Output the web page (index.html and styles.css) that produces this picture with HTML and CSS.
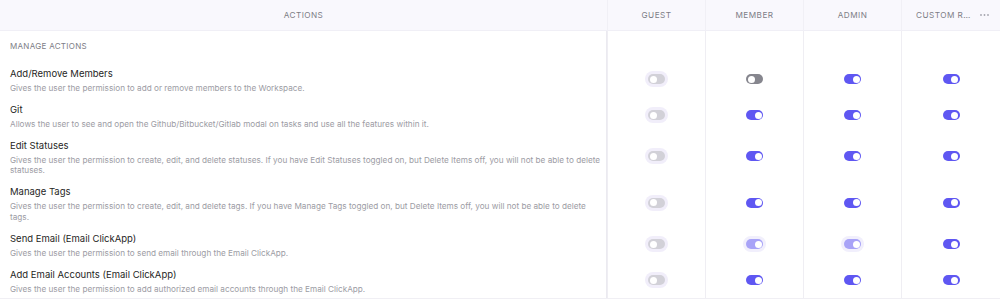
FILE: index.html
```html
<!DOCTYPE html>
<html lang="en">
<head>
    <meta charset="UTF-8">
    <meta name="viewport" content="width=device-width, initial-scale=1.0">
    <title>Permissions</title>
    <link rel="stylesheet" href="styles.css">
</head>
<body>
    <div class="perm-table">
        <div class="row head">
            <div class="cell">Actions</div>
            <div class="cell">Guest</div>
            <div class="cell">Member</div>
            <div class="cell">Admin</div>
            <div class="cell custom">
                <span class="custom-name">Custom Role</span>
                <svg class="more" width="9" height="4" viewBox="0 0 9 4">
                    <circle cx="1" cy="2" r="0.9"/>
                    <circle cx="4.5" cy="2" r="0.9"/>
                    <circle cx="8" cy="2" r="0.9"/>
                </svg>
            </div>
        </div>

        <div class="row section">
            <div class="cell label">Manage actions</div>
            <div class="cell"></div>
            <div class="cell"></div>
            <div class="cell"></div>
            <div class="cell"></div>
        </div>

        <div class="row">
            <div class="cell action">
                <div class="title">Add/Remove Members</div>
                <div class="desc">Gives the user the permission to add or remove members to the Workspace.</div>
            </div>
            <div class="cell"><span class="toggle disabled"></span></div>
            <div class="cell"><span class="toggle off"></span></div>
            <div class="cell"><span class="toggle on"></span></div>
            <div class="cell"><span class="toggle on"></span></div>
        </div>

        <div class="row">
            <div class="cell action">
                <div class="title">Git</div>
                <div class="desc">Allows the user to see and open the Github/Bitbucket/Gitlab modal on tasks and use all the features within it.</div>
            </div>
            <div class="cell"><span class="toggle disabled"></span></div>
            <div class="cell"><span class="toggle on"></span></div>
            <div class="cell"><span class="toggle on"></span></div>
            <div class="cell"><span class="toggle on"></span></div>
        </div>

        <div class="row">
            <div class="cell action">
                <div class="title">Edit Statuses</div>
                <div class="desc">Gives the user the permission to create, edit, and delete statuses. If you have Edit Statuses toggled on, but Delete Items off, you will not be able to delete statuses.</div>
            </div>
            <div class="cell"><span class="toggle disabled"></span></div>
            <div class="cell"><span class="toggle on"></span></div>
            <div class="cell"><span class="toggle on"></span></div>
            <div class="cell"><span class="toggle on"></span></div>
        </div>

        <div class="row">
            <div class="cell action">
                <div class="title">Manage Tags</div>
                <div class="desc">Gives the user the permission to create, edit, and delete tags. If you have Manage Tags toggled on, but Delete Items off, you will not be able to delete tags.</div>
            </div>
            <div class="cell"><span class="toggle disabled"></span></div>
            <div class="cell"><span class="toggle on"></span></div>
            <div class="cell"><span class="toggle on"></span></div>
            <div class="cell"><span class="toggle on"></span></div>
        </div>

        <div class="row">
            <div class="cell action">
                <div class="title">Send Email (Email ClickApp)</div>
                <div class="desc">Gives the user the permission to send email through the Email ClickApp.</div>
            </div>
            <div class="cell"><span class="toggle disabled"></span></div>
            <div class="cell"><span class="toggle on locked"></span></div>
            <div class="cell"><span class="toggle on locked"></span></div>
            <div class="cell"><span class="toggle on"></span></div>
        </div>

        <div class="row last">
            <div class="cell action">
                <div class="title">Add Email Accounts (Email ClickApp)</div>
                <div class="desc">Gives the user the permission to add authorized email accounts through the Email ClickApp.</div>
            </div>
            <div class="cell"><span class="toggle disabled"></span></div>
            <div class="cell"><span class="toggle on"></span></div>
            <div class="cell"><span class="toggle on"></span></div>
            <div class="cell"><span class="toggle on"></span></div>
        </div>
    </div>
</body>
</html>
```

FILE: styles.css
```css
* {
    box-sizing: border-box;
}
body {
    margin: 0;
    font-family: Inter, "Noto Sans", sans-serif;
    background: #fff;
    color: #2a2a30;
}
.perm-table {
    width: 1000px;
}
.row {
    display: grid;
    grid-template-columns: 607px 98px 98px 98px 1fr;
}
.cell {
    border-left: 1px solid #efeef3;
    display: flex;
    align-items: center;
    justify-content: center;
}
.cell:first-child {
    border-left: none;
}
.row + .row .cell:first-child {
    border-right: 1px solid #ebeaf0;
}
.head {
    height: 31px;
    background: #f9f8fd;
    border-bottom: 1px solid #f0eff6;
}
.head .cell {
    font-size: 8.2px;
    letter-spacing: 0.45px;
    text-transform: uppercase;
    color: #7d7d86;
    border-left-color: #f1f0f6;
}
.head .custom {
    justify-content: flex-start;
    padding: 0 8px 0 14px;
    gap: 8px;
}
.custom-name {
    width: 56px;
    white-space: nowrap;
    overflow: hidden;
    text-overflow: ellipsis;
}
.more {
    fill: #a5a5ad;
}
.section .cell {
    height: 30px;
}
.section .label {
    justify-content: flex-start;
    padding: 0 10px;
    font-size: 8px;
    letter-spacing: 0.3px;
    text-transform: uppercase;
    color: #7d7d86;
}
.action {
    display: block;
    padding: 2.5px 4px 4px 10px;
}
.title {
    font-size: 9.5px;
    line-height: 19px;
    color: #1f1f25;
}
.desc {
    font-size: 8.2px;
    line-height: 10.5px;
    color: #9c9ca4;
}
.last {
    border-bottom: 1px solid #f0eff4;
}
.toggle {
    position: relative;
    width: 17px;
    height: 10px;
    border-radius: 5px;
    background: #5f57f2;
}
.toggle::after {
    content: "";
    position: absolute;
    top: 1.5px;
    left: 1.5px;
    width: 7px;
    height: 7px;
    border-radius: 50%;
    background: #fff;
}
.toggle.on::after {
    left: 8.5px;
}
.toggle.off {
    background: #86868e;
}
.toggle.disabled {
    background: #d2d1d8;
    box-shadow: 0 0 0 3px #f1eefa;
}
.toggle.locked {
    background: #a8a3f7;
    box-shadow: 0 0 0 3px #f1effc;
}
```
